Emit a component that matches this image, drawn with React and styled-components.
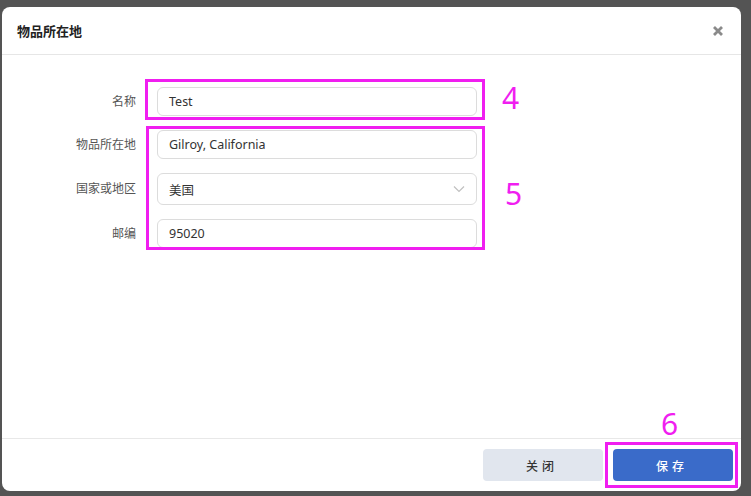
import React from "react";
import styled, { createGlobalStyle } from "styled-components";

const Global = createGlobalStyle`
  html, body { margin: 0; padding: 0; }
  body { background: #545454; font-family: "Noto Sans", "Noto Sans CJK SC", sans-serif; }
  * { box-sizing: border-box; }
`;

const Backdrop = styled.div`
  width: 751px;
  height: 496px;
  background: #545454;
  padding: 7px 10px 5px 2px;
  display: flex;
`;

const Dialog = styled.div`
  position: relative;
  width: 739px;
  height: 484px;
  background: #fff;
  border-radius: 8px;
  display: flex;
  flex-direction: column;
`;

const Header = styled.div`
  height: 48px;
  padding: 0 17px 0 15px;
  display: flex;
  align-items: center;
  justify-content: space-between;
  border-bottom: 1px solid #e6e6e6;
`;

const Title = styled.div`
  font-family: "Noto Sans CJK SC", sans-serif;
  font-size: 13px;
  font-weight: 700;
  color: #222;
`;

const Close = styled.button`
  border: 0;
  background: none;
  padding: 0;
  width: 12px;
  height: 12px;
  display: flex;
  cursor: pointer;
`;

const Body = styled.div`
  flex: 1;
  padding-top: 32px;
  display: flex;
  flex-direction: column;
  gap: 14px;
`;

const Row = styled.div`
  display: grid;
  grid-template-columns: 134px 320px;
  column-gap: 21px;
  align-items: center;
`;

const Label = styled.label`
  text-align: right;
  font-family: "Noto Sans CJK SC", sans-serif;
  font-size: 12px;
  color: #555;
  margin-top: -3px;
`;

const Field = styled.div`
  height: ${(p) => p.$h || 29}px;
  border: 1px solid #dcdcdc;
  border-radius: 6px;
  padding: 0 11px;
  display: flex;
  align-items: center;
  justify-content: space-between;
  font-family: "Noto Sans", "Noto Sans CJK SC", sans-serif;
  font-size: 12.5px;
  color: #333;
`;

const Footer = styled.div`
  border-top: 1px solid #e8e8e8;
  padding: 10px 8px 10px 0;
  display: flex;
  justify-content: flex-end;
  gap: 10px;
`;

const Button = styled.button`
  width: 120px;
  height: 32px;
  border: 0;
  border-radius: 4px;
  font-family: "Noto Sans CJK SC", sans-serif;
  font-size: 12px;
  font-weight: 500;
  letter-spacing: 4px;
  padding-left: 4px;
  background: ${(p) => (p.$primary ? "#3a6bc9" : "#e1e6ee")};
  color: ${(p) => (p.$primary ? "#fff" : "#333")};
`;

const Mark = styled.div`
  position: absolute;
  left: ${(p) => p.$x}px;
  top: ${(p) => p.$y}px;
  width: ${(p) => p.$w}px;
  height: ${(p) => p.$h}px;
  border: 3px solid #f01ef0;
  pointer-events: none;
`;

const Num = styled.div`
  position: absolute;
  left: ${(p) => p.$x}px;
  top: ${(p) => p.$y}px;
  font-family: "Noto Sans", sans-serif;
  font-weight: 400;
  font-size: 30px;
  line-height: 30px;
  color: #f01ef0;
`;

const Chevron = () => (
  <svg width="12" height="8" viewBox="0 0 12 8">
    <path d="M1 1.5 L6 6.5 L11 1.5" fill="none" stroke="#c0c0c0" strokeWidth="1.2" />
  </svg>
);

export default function App() {
  return (
    <>
      <Global />
      <Backdrop>
        <Dialog>
          <Header>
            <Title>物品所在地</Title>
            <Close aria-label="close">
              <svg width="12" height="12" viewBox="0 0 12 12">
                <path d="M2 2 L10 10 M10 2 L2 10" stroke="#8a8a8a" strokeWidth="2.8" strokeLinecap="butt" />
              </svg>
            </Close>
          </Header>
          <Body>
            <Row>
              <Label>名称</Label>
              <Field>Test</Field>
            </Row>
            <Row>
              <Label>物品所在地</Label>
              <Field>Gilroy, California</Field>
            </Row>
            <Row>
              <Label>国家或地区</Label>
              <Field $h={32}>
                <span>美国</span>
                <Chevron />
              </Field>
            </Row>
            <Row>
              <Label>邮编</Label>
              <Field>95020</Field>
            </Row>
          </Body>
          <Footer>
            <Button>关闭</Button>
            <Button $primary>保存</Button>
          </Footer>
          <Mark $x={143} $y={72} $w={340} $h={41} />
          <Mark $x={144} $y={119} $w={339} $h={124} />
          <Mark $x={603} $y={435} $w={133} $h={46} />
          <Num $x={500} $y={76}>4</Num>
          <Num $x={503} $y={172}>5</Num>
          <Num $x={659} $y={402}>6</Num>
        </Dialog>
      </Backdrop>
    </>
  );
}
